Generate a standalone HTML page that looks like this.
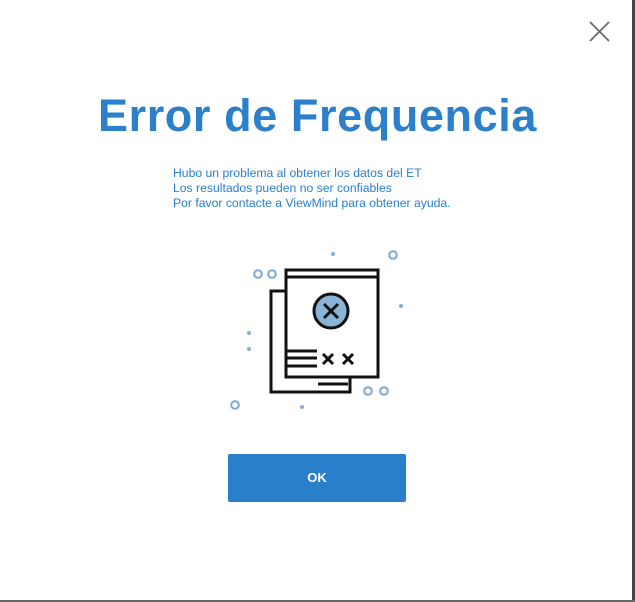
<!DOCTYPE html>
<html><head><meta charset="utf-8"><style>
html,body{margin:0;padding:0;width:635px;height:602px;overflow:hidden;background:#fff;font-family:"Liberation Sans",sans-serif;position:relative}
.bot{position:absolute;left:0;top:600px;width:635px;height:2px;background:#666}
.right{position:absolute;left:632px;top:0;width:3px;height:602px;background:#444}
h1{position:absolute;left:0;width:635px;top:90px;margin:0;text-align:center;color:#2b7fcb;font-size:45px;font-weight:bold;letter-spacing:0.6px}
.msg{position:absolute;left:173px;top:166px;color:#2b7fcb;font-size:12.2px;line-height:15px}
.btn{position:absolute;left:228px;top:454px;width:178px;height:48px;background:#2a7fcb;border-radius:2px;color:#fff;font-size:13px;font-weight:bold;text-align:center;line-height:48px}
</style></head><body>
<div class="right"></div><div class="bot"></div>
<svg style="position:absolute;left:0;top:0" width="632" height="600">
<path d="M590 22 L609 41 M609 22 L590 41" stroke="#6b6b6b" stroke-width="1.8" fill="none"/>
<g stroke="#111" stroke-width="3" fill="none">
<path d="M286 291 H271 V392 H350 V378"/>
<path d="M318 384 H348"/>
<rect x="286" y="270" width="92" height="107" fill="#fff"/>
<path d="M286 277 H378"/>
<circle cx="331" cy="311" r="17" fill="#8ab4d6"/>
<path d="M324 304 L338 318 M338 304 L324 318"/>
<path d="M287 351 H317 M287 358 H317 M287 366 H317"/>
<path d="M323 354 L333 364 M333 354 L323 364 M343 354 L353 364 M353 354 L343 364"/>
</g>
<g stroke="#86aed3" stroke-width="2.2" fill="none">
<circle cx="258" cy="274" r="3.8"/><circle cx="272" cy="274" r="3.8"/>
<circle cx="393" cy="255" r="3.8"/><circle cx="368" cy="391" r="3.8"/>
<circle cx="384" cy="391" r="3.8"/><circle cx="235" cy="405" r="3.8"/>
</g>
<g fill="#86aed3">
<circle cx="333" cy="254" r="2"/><circle cx="401" cy="306" r="2"/>
<circle cx="249" cy="333" r="2"/><circle cx="249" cy="349" r="2"/>
<circle cx="302" cy="407" r="2"/>
</g>
</svg>
<h1>Error de Frequencia</h1>
<div class="msg">Hubo un problema al obtener los datos del ET<br>Los resultados pueden no ser confiables<br>Por favor contacte a ViewMind para obtener ayuda.</div>
<div class="btn">OK</div>
</body></html>
